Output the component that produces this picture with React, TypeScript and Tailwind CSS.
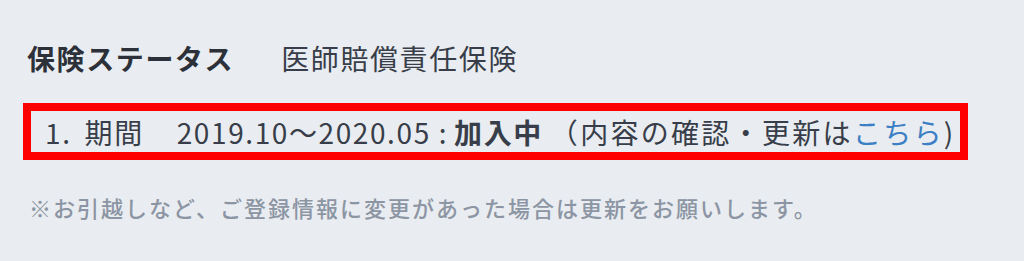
export default function App() {
  return (
    <div className="h-[261px] w-[1024px] overflow-hidden bg-[#e9ecf0] font-['Noto_Sans_CJK_JP',sans-serif] text-[#383e49]">
      <div className="flex flex-col items-start pt-[38px]">
        <div className="flex h-[40px] items-center pl-[27px] text-[28px] leading-[40px] tracking-[1.6px]">
          <span className="font-bold text-[#2c3038]">保険ステータス</span>
          <span className="ml-[47px]">医師賠償責任保険</span>
        </div>
        <div className="ml-[23px] mt-[25px] flex h-[57px] w-[945px] items-center border-[8px] border-[#ff0000] pl-[14px] text-[28px] leading-[40px] tracking-[1.6px]">
          <span>1.</span>
          <span className="ml-[13px]">期間</span>
          <span className="ml-[33px]">2019.10～2020.05 :</span>
          <span className="ml-[6px] font-bold">加入中</span>
          <span className="ml-[7px] tracking-[2.3px]">（内容の確認・更新は</span>
          <a href="#" className="tracking-[2.3px] text-[#3b7fc4]">
            こちら
          </a>
          <span>)</span>
        </div>
        <p className="mt-[32px] pl-[29px] text-[22px] font-medium leading-[30px] tracking-[2px] text-[#8c95a3]">
          ※お引越しなど、ご登録情報に変更があった場合は更新をお願いします。
        </p>
      </div>
    </div>
  );
}
